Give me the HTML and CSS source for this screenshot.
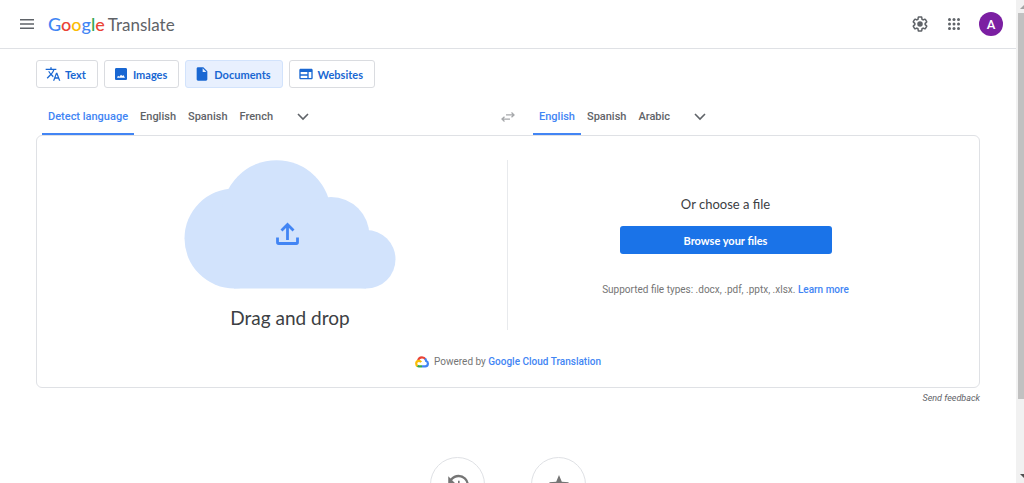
FILE: index.html
```html
<!DOCTYPE html>
<html lang="en">
<head>
<meta charset="utf-8">
<meta name="viewport" content="width=device-width, initial-scale=1">
<title>Google Translate</title>
<link rel="stylesheet" href="styles.css">
</head>
<body>
<div class="window">
  <div class="page">
    <header class="header">
      <button class="icon-button" aria-label="Main menu">
        <svg width="14" height="10" viewBox="0 0 14 10" fill="#5f6368"><path d="M0 0h14v1.5H0zM0 4.2h14v1.5H0zM0 8.4h14v1.5H0z"/></svg>
      </button>
      <a class="brand" href="#"><span class="logo"><span class="blue">G</span><span class="red">o</span><span class="yellow">o</span><span class="blue">g</span><span class="green">l</span><span class="red">e</span></span><span class="product">Translate</span></a>
      <div class="tools">
        <button class="icon-button" aria-label="Settings">
          <svg width="18" height="18" viewBox="0 0 24 24" fill="#5f6368"><path d="M13.85 22.25h-3.7c-.74 0-1.36-.54-1.45-1.27l-.27-1.89c-.27-.14-.53-.29-.79-.46l-1.8.72c-.7.26-1.47-.03-1.81-.65L2.2 15.53c-.35-.66-.2-1.44.36-1.88l1.53-1.19c-.01-.15-.02-.3-.02-.46 0-.15.01-.31.02-.46l-1.52-1.19c-.59-.45-.74-1.26-.37-1.88l1.85-3.19c.34-.62 1.11-.9 1.79-.63l1.81.73c.26-.17.52-.32.78-.46l.27-1.91c.09-.7.71-1.25 1.44-1.25h3.7c.74 0 1.36.54 1.45 1.27l.27 1.89c.27.14.53.29.79.46l1.8-.72c.71-.26 1.48.03 1.82.65l1.84 3.18c.36.66.2 1.44-.36 1.88l-1.52 1.19c.01.15.02.3.02.46s-.01.31-.02.46l1.52 1.19c.56.45.72 1.23.37 1.86l-1.86 3.22c-.34.62-1.11.9-1.8.63l-1.8-.72c-.26.17-.52.32-.78.46l-.27 1.91c-.1.68-.72 1.22-1.46 1.22zm-3.23-2h2.76l.37-2.55.53-.22c.44-.18.88-.44 1.34-.78l.45-.34 2.38.96 1.38-2.4-2.03-1.58.07-.56c.03-.26.06-.51.06-.78s-.03-.53-.06-.78l-.07-.56 2.03-1.58-1.39-2.4-2.39.96-.45-.35c-.42-.32-.87-.58-1.33-.77l-.52-.22-.37-2.55h-2.76l-.37 2.55-.53.21c-.44.19-.88.44-1.34.79l-.45.33-2.38-.95-1.39 2.39 2.03 1.58-.07.56a7 7 0 0 0-.06.79c0 .26.02.53.06.78l.07.56-2.03 1.58 1.38 2.4 2.39-.96.45.35c.43.33.86.58 1.33.77l.53.22z"/><circle cx="12" cy="12" r="3.7"/></svg>
        </button>
        <button class="icon-button" aria-label="Google apps">
          <svg width="12" height="12" viewBox="0 0 12 12" fill="#5f6368"><circle cx="1.5" cy="1.5" r="1.5"/><circle cx="6" cy="1.5" r="1.5"/><circle cx="10.5" cy="1.5" r="1.5"/><circle cx="1.5" cy="6" r="1.5"/><circle cx="6" cy="6" r="1.5"/><circle cx="10.5" cy="6" r="1.5"/><circle cx="1.5" cy="10.5" r="1.5"/><circle cx="6" cy="10.5" r="1.5"/><circle cx="10.5" cy="10.5" r="1.5"/></svg>
        </button>
        <button class="avatar" aria-label="Account">A</button>
      </div>
    </header>
    <main class="main">
      <nav class="modes" aria-label="Translation types">
        <button class="mode"><svg width="16" height="16" viewBox="0 0 24 24" fill="#1967d2"><path d="M12.87 15.07l-2.54-2.51.03-.03A17.52 17.52 0 0 0 14.07 6H17V4h-7V2H8v2H1v1.99h11.17C11.5 7.92 10.44 9.75 9 11.35 8.07 10.32 7.3 9.19 6.69 8h-2c.73 1.63 1.73 3.17 2.98 4.56l-5.09 5.02L4 19l5-5 3.11 3.11.76-2.04zM18.5 10h-2L12 22h2l1.12-3h4.75L21 22h2l-4.5-12zm-2.62 7l1.62-4.33L19.12 17h-3.24z"/></svg>Text</button>
        <button class="mode"><svg width="16" height="16" viewBox="0 0 24 24" fill="#1967d2"><path d="M21 19V5c0-1.100-.9-2-2-2H5c-1.100 0-2 .9-2 2v14c0 1.100.9 2 2 2h14c1.100 0 2-.9 2-2zM7.500 14.500l2 1.500 2.500-3 2 2 1.500-1.500L18 17.500H6z" fill-rule="evenodd"/></svg>Images</button>
        <button class="mode mode-active" aria-current="page"><svg width="16" height="16" viewBox="0 0 24 24" fill="#1967d2"><path d="M6 2c-1.100 0-2 .9-2 2v16c0 1.100.9 2 2 2h12c1.100 0 2-.9 2-2V8l-6-6H6zm7 7V3.500L18.500 9H13z"/></svg>Documents</button>
        <button class="mode"><svg width="16" height="16" viewBox="0 0 24 24" fill="#1967d2"><path d="M20 4H4c-1.100 0-2 .9-2 2v12c0 1.100.9 2 2 2h16c1.100 0 2-.9 2-2V6c0-1.100-.9-2-2-2zm-6 14H4v-3.500h10V18zm0-5.500H4V9h10v3.500zm6 5.500h-4V9h4v9z"/></svg>Websites</button>
      </nav>
      <div class="languages">
        <div class="tabs">
          <button class="tab tab-active">Detect language</button>
          <button class="tab">English</button>
          <button class="tab">Spanish</button>
          <button class="tab">French</button>
          <button class="more" aria-label="More source languages"><svg width="12" height="8" viewBox="0 0 12 8" fill="none" stroke="#5f6368" stroke-width="1.600"><path d="M1 1l5 5 5-5"/></svg></button>
        </div>
        <button class="swap" aria-label="Swap languages"><svg width="14" height="10" viewBox="0 0 14 10" fill="none" stroke="#a6a8ab" stroke-width="1.300"><path d="M5 2.900h8M10.500.5L13 2.900l-2.500 2.400M9 7.100H1M3.500 4.700L1 7.100l2.500 2.400"/></svg></button>
        <div class="tabs">
          <button class="tab tab-active">English</button>
          <button class="tab">Spanish</button>
          <button class="tab">Arabic</button>
          <button class="more" aria-label="More target languages"><svg width="12" height="8" viewBox="0 0 12 8" fill="none" stroke="#5f6368" stroke-width="1.600"><path d="M1 1l5 5 5-5"/></svg></button>
        </div>
      </div>
      <section class="card">
        <div class="upload">
          <div class="drop">
            <svg width="212" height="129" viewBox="0 0 212 129" fill="#d2e3fc"><circle cx="50.500" cy="78.500" r="50"/><circle cx="92.500" cy="54.700" r="54.500"/><circle cx="147" cy="75.400" r="38.400"/><circle cx="182.200" cy="99.200" r="29.300"/><path d="M50 75h132v53.500H50z"/><g fill="none" stroke="#4285f4" stroke-width="2.800"><path d="M103.500 80V64.500M97.500 70.500l6-6 6 6"/><path d="M93.500 77.500v4.800q0 1.200 1.200 1.200h17.600q1.200 0 1.200-1.200v-4.800"/></g></svg>
            <h1 class="drop-title">Drag and drop</h1>
          </div>
          <div class="choose">
            <h2 class="choose-title">Or choose a file</h2>
            <button class="browse">Browse your files</button>
            <p class="note">Supported file types: .docx, .pdf, .pptx, .xlsx. <a href="#">Learn more</a></p>
          </div>
        </div>
        <p class="powered"><svg width="14" height="12" viewBox="0 0 14 12" fill="none" stroke-width="2.200"><path d="M3 5.100C3.300 2.900 5 1.300 7 1.300c1.500 0 2.700.7 3.400 2" stroke="#ea4335"/><path d="M10 2.700c.8.700 1 1.400 1.100 2.300 1.100.3 1.800 1.200 1.800 2.400 0 1.700-1.200 2.900-2.700 2.900H7" stroke="#4285f4"/><path d="M7 10.300H4c-.8 0-1.300-.2-1.800-.6" stroke="#34a853"/><path d="M2.500 10C1.600 9.500 1.200 8.600 1.200 7.600c0-1.500 1.200-2.700 2.700-2.700 1 0 1.700.4 2.300 1.200" stroke="#fbbc04"/></svg><span>Powered by <a href="#">Google Cloud Translation</a></span></p>
      </section>
      <div class="feedback"><a href="#">Send feedback</a></div>
      <div class="shortcuts">
        <button class="round" aria-label="History"><svg width="26" height="26" viewBox="0 0 24 24" fill="#757575"><path d="M13.500 8H12v5l4.280 2.540.72-1.210-3.500-2.080V8zM12.500 2.500a9.500 9.500 0 0 0-7.400 3.600L3 4v6.500h6.500L6.600 7.600A7.500 7.500 0 1 1 5 12H3a9.500 9.500 0 1 0 9.500-9.500z"/></svg></button>
        <button class="round" aria-label="Saved"><svg width="24" height="24" viewBox="0 0 24 24" fill="#757575"><path d="M12 17.270L18.180 21l-1.640-7.030L22 9.240l-7.190-.61L12 2 9.190 8.630 2 9.240l5.460 4.730L5.820 21z"/></svg></button>
      </div>
    </main>
  </div>
  <div class="scrollbar" aria-hidden="true">
    <svg width="4" height="4" viewBox="0 0 4 4" fill="#a3a3a3"><path d="M0 4l4-4v4z"/></svg>
    <div class="thumb"></div>
    <svg class="arrow-down" width="4" height="4" viewBox="0 0 4 4" fill="#505050"><path d="M0 0h4v4z"/></svg>
  </div>
</div>
</body>
</html>
```
FILE: styles.css
```css
* { box-sizing: border-box; }
body {
  margin: 0;
  font-family: Roboto, "Liberation Sans", sans-serif;
  font-size: 11px;
  color: #3c4043;
  background: #fff;
}
h1, h2, p { margin: 0; font-weight: 400; }
button {
  font: inherit;
  color: inherit;
  background: none;
  border: 0;
  padding: 0;
}
a { color: #4285f4; text-decoration: none; }
svg { display: block; flex: none; }
.window { display: flex; height: 100vh; overflow: hidden; }
.page { flex: 1; min-width: 0; }
.header {
  display: flex;
  align-items: center;
  height: 49px;
  padding: 0 13px 0 18px;
  border-bottom: 1px solid #dfe1e5;
}
.icon-button { display: grid; place-items: center; width: 18px; height: 24px; }
.brand {
  display: flex;
  align-items: baseline;
  gap: 3px;
  margin-left: 12px;
  font-family: Lato, "Open Sans", sans-serif;
  color: #5f6368;
}
.logo { font-size: 18px; font-weight: 500; line-height: 24px; }
.product { font-size: 17px; line-height: 24px; }
.blue { color: #4285f4; }
.red { color: #ea4335; }
.yellow { color: #fbbc04; }
.green { color: #34a853; }
.tools { display: flex; align-items: center; gap: 16px; margin-left: auto; }
.avatar {
  width: 24px;
  height: 24px;
  border-radius: 50%;
  background: #7b1fa2;
  color: #fff;
  font-size: 13px;
  font-weight: 500;
}
.main { padding: 11px 36px 0; }
.modes { display: flex; gap: 6px; }
.mode {
  display: flex;
  align-items: center;
  gap: 4px;
  height: 28px;
  padding: 0 11px 0 8px;
  border: 1px solid #dadce0;
  border-radius: 3px;
  font-family: Lato, sans-serif;
  font-weight: 700;
  color: #1967d2;
}
.mode-active { background: #e8f0fe; border-color: #d2e3fc; }
.languages {
  display: grid;
  grid-template-columns: 1fr 50px 1fr;
  height: 47px;
  padding: 10px 6px 0;
}
.tabs { display: flex; min-width: 0; }
.tab {
  height: 37px;
  padding: 1px 6px 0;
  border-bottom: 2px solid transparent;
  font-weight: 500;
  color: #5f6368;
}
.tab-active { color: #4285f4; border-bottom-color: #4285f4; }
.more { margin-left: 12px; width: 24px; }
.more svg { margin: auto; }
.swap svg { margin: auto; }
.card {
  padding: 24px 36px 17px;
  border: 1px solid #dfe1e5;
  border-radius: 6px;
}
.upload { display: grid; grid-template-columns: 1fr 1fr; min-height: 170px; }
.drop {
  display: flex;
  flex-direction: column;
  align-items: center;
  border-right: 1px solid #e8eaed;
}
.drop-title {
  margin-top: 16px;
  font-family: Lato, sans-serif;
  font-size: 19px;
  line-height: 25px;
}
.choose { display: flex; flex-direction: column; align-items: center; padding-top: 34px; }
.choose-title { font-family: Lato, sans-serif; font-size: 13px; line-height: 20px; }
.browse {
  width: 212px;
  height: 28px;
  margin-top: 12px;
  border-radius: 3px;
  background: #1a73e8;
  color: #fff;
  font-family: Lato, sans-serif;
  font-weight: 700;
}
.note { margin-top: 28px; font-size: 10px; line-height: 16px; color: #757575; }
.note a, .powered a { font-weight: 500; }
.powered {
  display: flex;
  justify-content: center;
  align-items: center;
  gap: 5px;
  margin-top: 24px;
  font-size: 10px;
  line-height: 16px;
  color: #757575;
}
.feedback { margin-top: 3px; text-align: right; font-size: 9px; line-height: 14px; font-style: italic; }
.feedback a { color: #5f6368; }
.shortcuts { display: flex; justify-content: center; gap: 46px; margin-top: 52px; }
.round {
  display: grid;
  place-items: center;
  width: 55px;
  height: 55px;
  border: 1px solid #dfe1e5;
  border-radius: 50%;
}
.scrollbar {
  display: flex;
  flex-direction: column;
  align-items: flex-end;
  width: 8px;
  padding: 5px 0;
  background: #f1f1f1;
}
.thumb { width: 6px; height: 80vh; margin-top: 4px; background: #c1c1c1; }
.arrow-down { margin-top: auto; }
```
